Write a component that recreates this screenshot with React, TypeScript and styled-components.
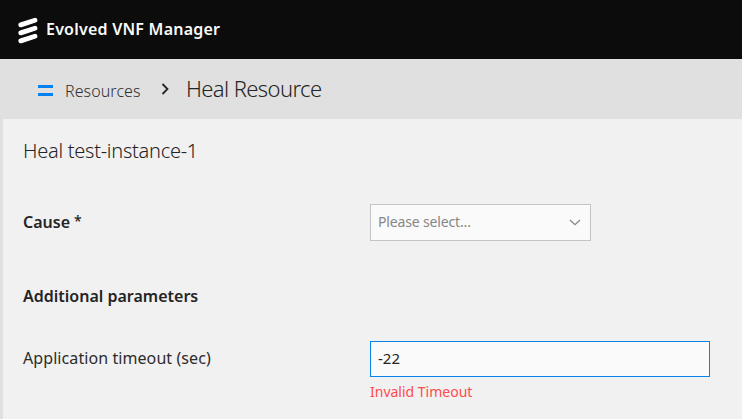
import React from "react";
import styled, { createGlobalStyle } from "styled-components";

const GlobalStyle = createGlobalStyle`
  * { box-sizing: border-box; }
  body {
    margin: 0;
    background: #f1f1f1;
    color: #242424;
    font-family: "Noto Sans", "Open Sans", sans-serif;
    font-size: 16px;
  }
`;

const Page = styled.div`
  display: flex;
  flex-direction: column;
  height: 419px;
  overflow: hidden;
`;

const Header = styled.header`
  display: flex;
  flex: none;
  align-items: center;
  gap: 8px;
  height: 59px;
  padding: 2px 0 0 18px;
  background: #0c0c0c;
`;

const Product = styled.h1`
  margin: -3px 0 0;
  color: #fafafa;
  font-size: 16px;
  font-weight: 600;
  line-height: 24px;
  letter-spacing: 0.22px;
  white-space: nowrap;
`;

const Breadcrumb = styled.nav`
  display: flex;
  flex: none;
  align-items: center;
  height: 60px;
  padding-left: 38px;
  background: #e0e0e0;
`;

const MenuIcon = styled.svg`
  margin: 3px 12px 0 0;
`;

const Crumb = styled.span`
  width: 96px;
  padding-top: 4px;
  color: #303030;
  font-size: 16px;
  font-weight: 300;
  line-height: 24px;
  letter-spacing: 0.08px;
`;

const CurrentCrumb = styled.span`
  margin-left: 16px;
  padding-bottom: 2px;
  font-size: 22px;
  font-weight: 300;
  line-height: 30px;
  letter-spacing: -0.6px;
  white-space: nowrap;
`;

const Content = styled.main`
  flex: 1;
  padding: 16px 0 0 20px;
  border-left: 3px solid #e0e0e0;
`;

const Title = styled.h2`
  margin: 0;
  font-size: 20px;
  font-weight: 300;
  line-height: 32px;
  letter-spacing: -0.27px;
  white-space: nowrap;
`;

const Row = styled.div<{ $top: number }>`
  display: grid;
  grid-template-columns: 347px 1fr;
  align-items: start;
  margin-top: ${(p) => p.$top}px;
`;

const Label = styled.label`
  color: #2c2c2c;
  font-size: 16px;
  font-weight: 400;
  line-height: 34px;
  letter-spacing: 0.08px;
  white-space: nowrap;
`;

const StrongLabel = styled(Label)`
  margin: 0;
  color: #242424;
  font-weight: 600;
  line-height: 36px;
  letter-spacing: 0;
`;

const Required = styled.span`
  margin-left: 4px;
  font-size: 14px;
  font-weight: 500;
  line-height: 1;
  vertical-align: 2px;
`;

const Select = styled.div`
  display: flex;
  align-items: center;
  justify-content: space-between;
  width: 221px;
  height: 37px;
  padding: 0 9px 2px 7px;
  border: 1px solid #c4c4c4;
  background: #fafafa;
  color: #868686;
  font-size: 14px;
  letter-spacing: -0.15px;
`;

const SelectArrow = styled.svg`
  margin-top: 1px;
`;

const Input = styled.input`
  display: block;
  width: 340px;
  height: 36px;
  padding: 0 7px 2px;
  border: 1px solid #0a82ec;
  border-radius: 0;
  outline: none;
  background: #fafafa;
  color: #242424;
  font: 400 15px "Noto Sans", sans-serif;
`;

const ErrorText = styled.div`
  margin-top: 5px;
  color: #ff4b4b;
  font-size: 14px;
  line-height: 20px;
`;

export default function App() {
  return (
    <Page>
      <GlobalStyle />
      <Header>
        <svg width="20" height="29" viewBox="0 0 20 29" fill="none" stroke="#fff" strokeWidth="4.8" strokeLinecap="round">
          <path d="M2.8 8.9 17 4.3M2.8 16.9 17 12.3M2.8 24.9 17 20.3" />
        </svg>
        <Product>Evolved VNF Manager</Product>
      </Header>
      <Breadcrumb>
        <MenuIcon width="15" height="11" viewBox="0 0 15 11" fill="#0082f0">
          <path d="M0 0h15v3H0zM0 8h15v3H0z" />
        </MenuIcon>
        <Crumb>Resources</Crumb>
        <svg width="9" height="14" viewBox="0 0 9 14" fill="none" stroke="#242424" strokeWidth="1.8">
          <path d="m1.5 2 5 5-5 5" />
        </svg>
        <CurrentCrumb>Heal Resource</CurrentCrumb>
      </Breadcrumb>
      <Content>
        <Title>Heal test-instance-1</Title>
        <Row $top={37}>
          <StrongLabel>
            Cause<Required>*</Required>
          </StrongLabel>
          <Select>
            Please select...
            <SelectArrow width="12" height="7" viewBox="0 0 12 7" fill="none" stroke="#868686" strokeWidth="1.3">
              <path d="m1 1 5 4.7 5-4.7" />
            </SelectArrow>
          </Select>
        </Row>
        <Row $top={37}>
          <StrongLabel as="h3">Additional parameters</StrongLabel>
        </Row>
        <Row $top={27}>
          <Label htmlFor="timeout">Application timeout (sec)</Label>
          <div>
            <Input id="timeout" defaultValue="-22" />
            <ErrorText>Invalid Timeout</ErrorText>
          </div>
        </Row>
      </Content>
    </Page>
  );
}
